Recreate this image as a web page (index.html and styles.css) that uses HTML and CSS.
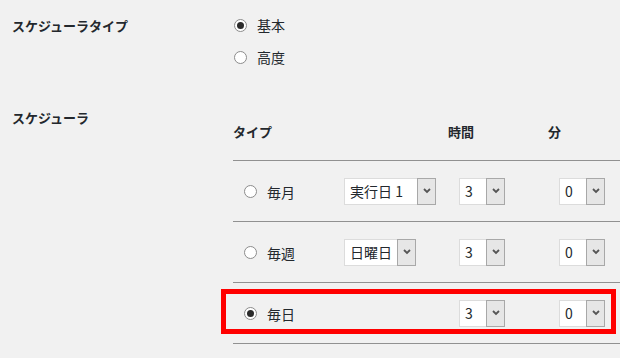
FILE: index.html
```html
<!DOCTYPE html>
<html lang="ja">
<head>
    <meta charset="UTF-8">
    <title>スケジューラ設定</title>
    <link rel="stylesheet" href="styles.css">
</head>
<body>
    <div class="page">
        <div class="form-row">
            <div class="label">スケジューラタイプ</div>
            <div class="field options">
                <label class="radio-line"><span class="radio checked"></span>基本</label>
                <label class="radio-line"><span class="radio"></span>高度</label>
            </div>
        </div>

        <div class="form-row schedule">
            <div class="label">スケジューラ</div>
            <div class="field sched-table">
                <div class="thead">
                    <div class="th">タイプ</div>
                    <div class="th"></div>
                    <div class="th">時間</div>
                    <div class="th">分</div>
                </div>

                <div class="trow">
                    <div class="td type"><span class="radio"></span>毎月</div>
                    <div class="td day">
                        <span class="select month-day"><span class="value">実行日 1</span><span class="arrow"><svg width="8" height="6" viewBox="0 0 8 6"><polyline points="1,1 4,4 7,1" fill="none" stroke="#555" stroke-width="1.8"/></svg></span></span>
                    </div>
                    <div class="td"><span class="select small"><span class="value">3</span><span class="arrow"><svg width="8" height="6" viewBox="0 0 8 6"><polyline points="1,1 4,4 7,1" fill="none" stroke="#555" stroke-width="1.8"/></svg></span></span></div>
                    <div class="td"><span class="select small"><span class="value">0</span><span class="arrow"><svg width="8" height="6" viewBox="0 0 8 6"><polyline points="1,1 4,4 7,1" fill="none" stroke="#555" stroke-width="1.8"/></svg></span></span></div>
                </div>

                <div class="trow">
                    <div class="td type"><span class="radio"></span>毎週</div>
                    <div class="td day">
                        <span class="select weekday"><span class="value">日曜日</span><span class="arrow"><svg width="8" height="6" viewBox="0 0 8 6"><polyline points="1,1 4,4 7,1" fill="none" stroke="#555" stroke-width="1.8"/></svg></span></span>
                    </div>
                    <div class="td"><span class="select small"><span class="value">3</span><span class="arrow"><svg width="8" height="6" viewBox="0 0 8 6"><polyline points="1,1 4,4 7,1" fill="none" stroke="#555" stroke-width="1.8"/></svg></span></span></div>
                    <div class="td"><span class="select small"><span class="value">0</span><span class="arrow"><svg width="8" height="6" viewBox="0 0 8 6"><polyline points="1,1 4,4 7,1" fill="none" stroke="#555" stroke-width="1.8"/></svg></span></span></div>
                </div>

                <div class="trow highlighted">
                    <div class="highlight"></div>
                    <div class="td type"><span class="radio checked"></span>毎日</div>
                    <div class="td day"></div>
                    <div class="td"><span class="select small"><span class="value">3</span><span class="arrow"><svg width="8" height="6" viewBox="0 0 8 6"><polyline points="1,1 4,4 7,1" fill="none" stroke="#555" stroke-width="1.8"/></svg></span></span></div>
                    <div class="td"><span class="select small"><span class="value">0</span><span class="arrow"><svg width="8" height="6" viewBox="0 0 8 6"><polyline points="1,1 4,4 7,1" fill="none" stroke="#555" stroke-width="1.8"/></svg></span></span></div>
                </div>
            </div>
        </div>
    </div>
</body>
</html>
```

FILE: styles.css
```css
html, body { margin: 0; background: #f1f1f1; }
body { font-family: "Noto Sans CJK JP", "Noto Sans", sans-serif; color: #23282d; font-size: 14px; overflow: hidden; }
.page { padding: 15px 0 0 12px; }

.form-row { display: flex; }
.form-row.schedule { margin-top: 40px; }
.label { width: 221px; flex: none; font-size: 13px; font-weight: 700; line-height: 20px; padding-top: 1px; }
.field { flex: 1; }

.options { display: flex; flex-direction: column; gap: 12px; }
.radio-line { display: flex; align-items: center; gap: 10px; line-height: 20px; padding-left: 1px; }

.radio { width: 11px; height: 11px; border: 1px solid #8c8c8c; border-radius: 50%; background: #fff; display: inline-flex; align-items: center; justify-content: center; flex: none; }
.radio.checked::after { content: ""; width: 7px; height: 7px; border-radius: 50%; background: #2b2b2b; }

.sched-table { display: flex; flex-direction: column; }
.thead, .trow { display: grid; grid-template-columns: 111px 104px 100px 1fr; }
.thead { border-bottom: 1px solid #919191; padding: 15px 0 18px; }
.th { font-size: 13px; font-weight: 700; line-height: 20px; }
.trow { height: 60px; border-bottom: 1px solid #919191; align-items: center; position: relative; }
.td { padding-left: 11px; display: flex; align-items: center; }
.td.day { padding-left: 0; }
.td.type { gap: 10px; padding-top: 1px; }

.select { display: inline-flex; height: 27px; box-sizing: border-box; border: 1px solid #dcdcdc; background: #fff; }
.select .value { flex: 1; padding-left: 5px; line-height: 25px; white-space: nowrap; }
.select .arrow { width: 17px; margin: -1px -1px -1px 0; border: 1px solid #a8a8a8; background: #e6e6e6; display: flex; align-items: center; justify-content: center; }
.select.month-day { width: 92px; }
.select.weekday { width: 72px; }
.select.small { width: 46px; }

.highlight { position: absolute; left: -12px; right: 4px; top: 6px; bottom: 9px; border: 5px solid #f00; }
```
